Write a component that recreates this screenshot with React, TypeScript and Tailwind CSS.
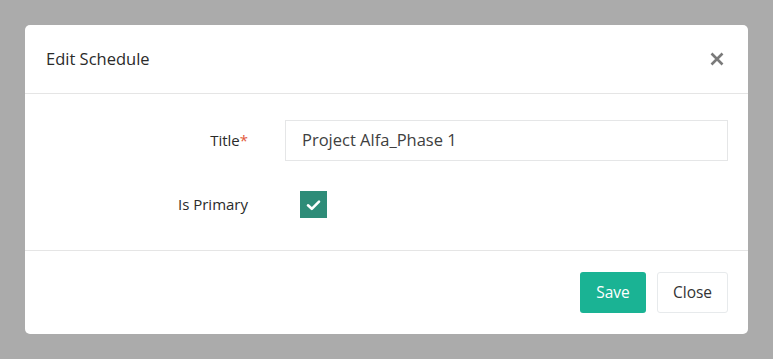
import React from "react";

export default function App() {
  return (
    <div className="w-[773px] h-[359px] bg-[#ababab] pt-[25px] pl-[25px]" style={{ fontFamily: '"Open Sans", "Noto Sans", sans-serif' }}>
      <div className="w-[723px] h-[309px] bg-white rounded-[5px] flex flex-col">
        <div className="h-[69px] flex items-center justify-between pl-[21px] pr-[21px] border-b border-[#e5e5e5]">
          <span className="text-[16.5px] text-[#2b2b2b]">Edit Schedule</span>
          <svg width="14" height="14" viewBox="0 0 14 14" className="mr-[3px]">
            <path d="M1.5 1.5 L12.5 12.5 M12.5 1.5 L1.5 12.5" stroke="#7a7a7a" strokeWidth="2.6" strokeLinecap="butt" />
          </svg>
        </div>
        <div className="h-[157px] border-b border-[#e5e5e5] pt-[26px]">
          <div className="flex items-center h-[41px]">
            <div className="w-[223px] text-right text-[15px] text-[#2b2b2b]">
              Title<span className="text-[#e2573b]">*</span>
            </div>
            <div className="ml-[37px] w-[443px] h-[41px] border border-[#e5e6e7] flex items-center pl-[16px] text-[16.5px] text-[#404040]">
              Project Alfa_Phase 1
            </div>
          </div>
          <div className="flex items-center mt-[30px] h-[27px]">
            <div className="w-[223px] text-right text-[15px] text-[#2b2b2b]">Is Primary</div>
            <div className="ml-[52px] w-[27px] h-[27px] bg-[#2e8c78] flex items-center justify-center">
              <svg width="15" height="12" viewBox="0 0 15 12">
                <path d="M2 6.3 L5.8 9.8 L13 2.6" stroke="#fff" strokeWidth="2.6" fill="none" strokeLinecap="round" strokeLinejoin="round" />
              </svg>
            </div>
          </div>
        </div>
        <div className="flex-1 flex justify-end items-start pt-[21px] pr-[20px] gap-[11px]">
          <button className="w-[66px] h-[41px] bg-[#1ab394] text-white rounded-[3px] text-[15.5px]">Save</button>
          <button className="w-[71px] h-[41px] bg-white border border-[#e7eaec] text-[#333] rounded-[3px] text-[15.5px]">Close</button>
        </div>
      </div>
    </div>
  );
}
